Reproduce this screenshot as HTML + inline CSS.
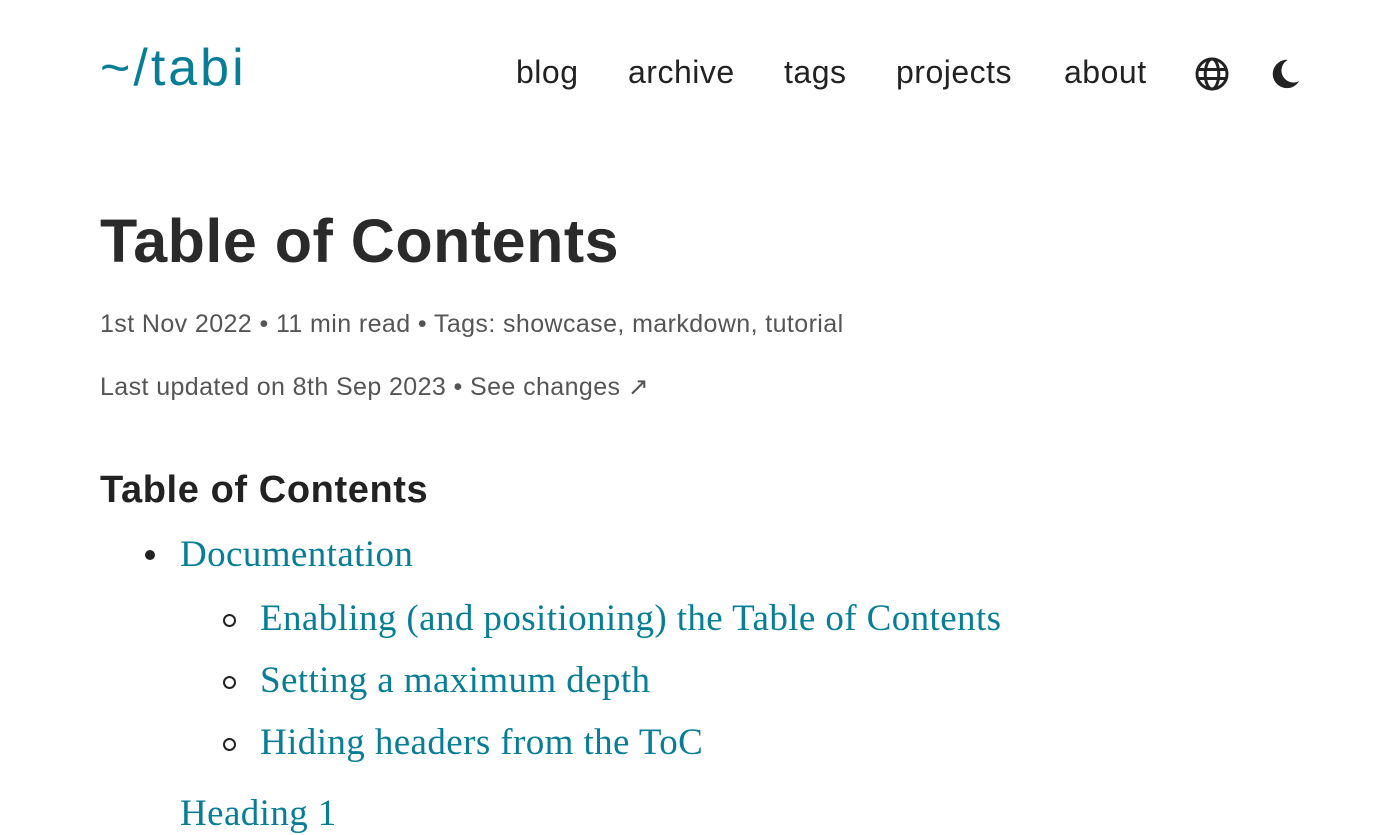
<!DOCTYPE html>
<html><head><meta charset="utf-8"><style>
body{margin:0;background:#fff;width:1400px;height:800px;overflow:hidden;font-family:"Liberation Sans",sans-serif;color:#222}
.logo{position:absolute;left:100px;top:38px;font-size:52px;color:#087e96;letter-spacing:3px}
.nav{position:absolute;top:54px;font-size:32px;color:#222;letter-spacing:0.5px}
.t{position:absolute;left:100px;top:206px;font-size:61px;font-weight:bold;color:#2a2a2a;letter-spacing:0.5px;white-space:nowrap}
.m{position:absolute;left:100px;font-size:25px;color:#555;white-space:nowrap;letter-spacing:0.4px}
.h2{position:absolute;left:100px;top:469px;font-size:38px;font-weight:bold;color:#222;letter-spacing:0.6px}
.li{position:absolute;font-family:"Liberation Serif",serif;font-size:37px;color:#087e96;white-space:nowrap;letter-spacing:0.4px}
.dot{position:absolute;width:10px;height:10px;border-radius:50%;background:#222}
.circ{position:absolute;width:9px;height:9px;border-radius:50%;border:2px solid #222}
</style></head><body>
<div class="logo">~/tabi</div>
<div class="nav" style="left:516px">blog</div>
<div class="nav" style="left:628px">archive</div>
<div class="nav" style="left:784px">tags</div>
<div class="nav" style="left:896px">projects</div>
<div class="nav" style="left:1064px">about</div>
<svg style="position:absolute;left:1194px;top:56px" width="36" height="36" viewBox="0 0 24 24" fill="none" stroke="#222" stroke-width="2"><circle cx="12" cy="12" r="10"/><ellipse cx="12" cy="12" rx="4.5" ry="10"/><line x1="2" y1="9" x2="22" y2="9"/><line x1="2" y1="15" x2="22" y2="15"/></svg>
<svg style="position:absolute;left:1268px;top:56px" width="34" height="36" viewBox="0 0 24 24"><path d="M14 2A10 10 0 1 0 22 17A8 8 0 0 1 14 2Z" fill="#222"/></svg>
<div class="t">Table of Contents</div>
<div class="m" style="top:310px">1st Nov 2022 • 11 min read • Tags: showcase, markdown, tutorial</div>
<div class="m" style="top:372px">Last updated on 8th Sep 2023 • See changes ↗</div>
<div class="h2">Table of Contents</div>
<div class="dot" style="left:145px;top:550px"></div>
<div class="li" style="left:180px;top:533px">Documentation</div>
<div class="circ" style="left:223px;top:614px"></div>
<div class="li" style="left:260px;top:597px">Enabling (and positioning) the Table of Contents</div>
<div class="circ" style="left:223px;top:676px"></div>
<div class="li" style="left:260px;top:659px">Setting a maximum depth</div>
<div class="circ" style="left:223px;top:738px"></div>
<div class="li" style="left:260px;top:721px">Hiding headers from the ToC</div>
<div class="li" style="left:180px;top:792px">Heading 1</div>
</body></html>
